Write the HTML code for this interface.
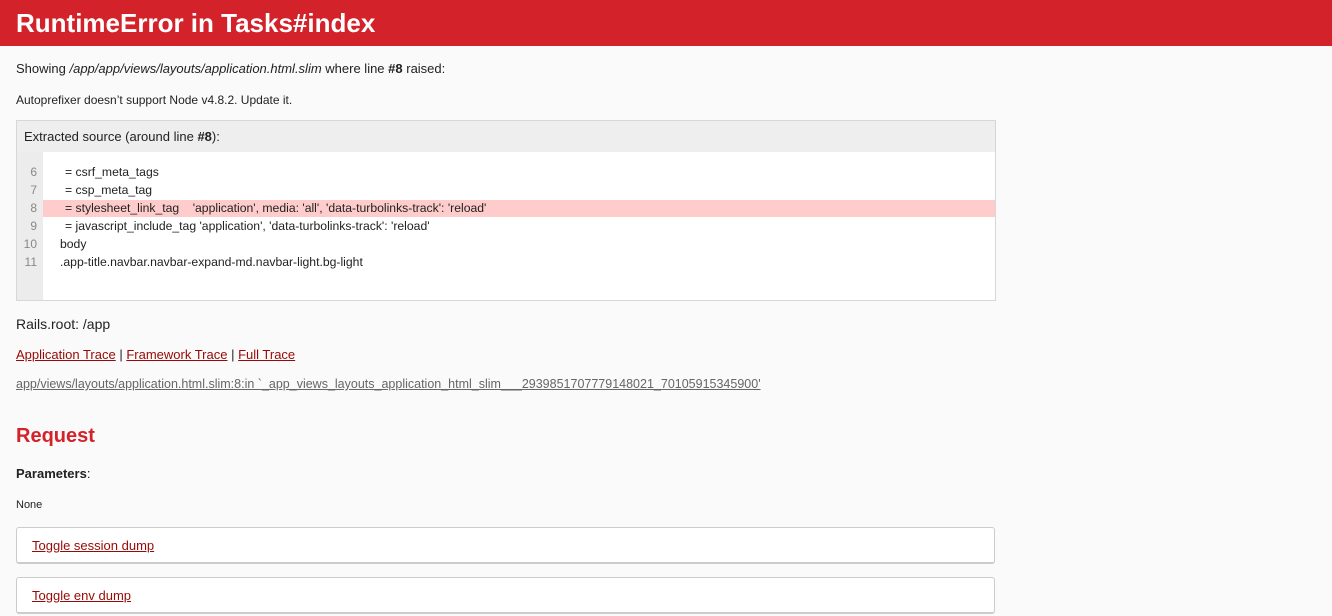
<!DOCTYPE html>
<html><head><meta charset="utf-8"><style>
body{margin:0;width:1332px;height:616px;overflow:hidden;background:#fafafa;font-family:"Liberation Sans",Helvetica,Arial,sans-serif;color:#222;position:relative}
.a{position:absolute;white-space:nowrap;line-height:1}
header{position:absolute;left:0;top:0;width:1332px;height:46px;background:#d4222b}
a{color:#980905;text-decoration:underline}
.src{position:absolute;left:16px;top:120px;width:978px;height:179px;border:1px solid #d7d7d7;background:#fff}
.src .h{position:absolute;left:0;top:0;width:978px;height:31px;background:#eee}
.src .n{position:absolute;left:0;top:31px;width:26px;height:148px;background:#ececec}
.hl{position:absolute;left:26px;top:79px;width:952px;height:17px;background:#fcc}
.ln{position:absolute;font-size:12px;line-height:1;color:#888;width:20px;text-align:right;left:0}
.cd{position:absolute;font-size:12.2px;line-height:1;color:#222;white-space:pre}
.box{position:absolute;left:16px;width:977px;height:34px;border:1px solid #ccc;border-bottom:2px solid #ccc;border-radius:3px;background:#fff}
</style></head><body>
<header><div class="a" style="left:16px;top:10px;font-size:26px;font-weight:bold;color:#fff;letter-spacing:0px">RuntimeError in Tasks#index</div></header>
<div class="a" style="left:16px;top:62px;font-size:13px">Showing <i>/app/app/views/layouts/application.html.slim</i> where line <b>#8</b> raised:</div>
<div class="a" style="left:16px;top:94px;font-size:12px">Autoprefixer doesn’t support Node v4.8.2. Update it.</div>
<div class="src"><div class="h"></div><div class="n"></div><div class="hl"></div>
<div class="a" style="left:7px;top:9px;font-size:13px">Extracted source (around line <b>#8</b>):</div>
<div class="ln" style="top:45px">6</div><div class="ln" style="top:63px">7</div><div class="ln" style="top:81px">8</div><div class="ln" style="top:99px">9</div><div class="ln" style="top:117px">10</div><div class="ln" style="top:135px">11</div>
<div class="cd" style="left:48px;top:45px">= csrf_meta_tags</div>
<div class="cd" style="left:48px;top:63px">= csp_meta_tag</div>
<div class="cd" style="left:48px;top:81px">= stylesheet_link_tag    'application', media: 'all', 'data-turbolinks-track': 'reload'</div>
<div class="cd" style="left:48px;top:99px">= javascript_include_tag 'application', 'data-turbolinks-track': 'reload'</div>
<div class="cd" style="left:43px;top:117px">body</div>
<div class="cd" style="left:43px;top:135px">.app-title.navbar.navbar-expand-md.navbar-light.bg-light</div>
</div>
<div class="a" style="left:16px;top:317px;font-size:14px">Rails.root: /app</div>
<div class="a" style="left:16px;top:348px;font-size:13px"><a>Application Trace</a> | <a>Framework Trace</a> | <a>Full Trace</a></div>
<div class="a" style="left:16px;top:378px;font-size:12.5px"><a style="color:#666">app/views/layouts/application.html.slim:8:in `_app_views_layouts_application_html_slim___2939851707779148021_70105915345900'</a></div>
<div class="a" style="left:16px;top:426px;font-size:20px;font-weight:bold;color:#d4222b">Request</div>
<div class="a" style="left:16px;top:467px;font-size:13px"><b>Parameters</b>:</div>
<div class="a" style="left:16px;top:500px;font-size:11px">None</div>
<div class="box" style="top:527px"><div class="a" style="left:15px;top:11px;font-size:13px"><a>Toggle session dump</a></div></div>
<div class="box" style="top:577px"><div class="a" style="left:15px;top:11px;font-size:13px"><a>Toggle env dump</a></div></div>
</body></html>
